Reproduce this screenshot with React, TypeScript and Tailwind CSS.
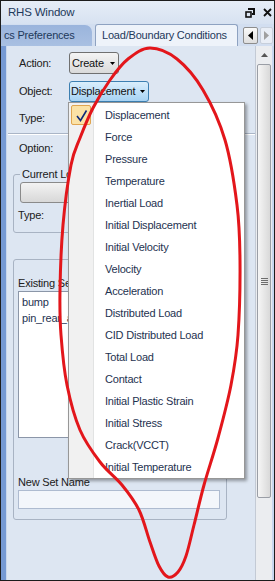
import React from "react";

const loadTypes = [
  "Displacement",
  "Force",
  "Pressure",
  "Temperature",
  "Inertial Load",
  "Initial Displacement",
  "Initial Velocity",
  "Velocity",
  "Acceleration",
  "Distributed Load",
  "CID Distributed Load",
  "Total Load",
  "Contact",
  "Initial Plastic Strain",
  "Initial Stress",
  "Crack(VCCT)",
  "Initial Temperature",
];

// hand drawn marker loop, traced from the screenshot
const loop: [number, number][] = [
  [150, 48], [177, 59], [203, 90], [225, 140], [237, 205], [240, 260], [238, 335],
  [231, 385], [218, 438], [204, 485], [194, 525], [186, 556], [178, 572], [168, 577],
  [159, 566], [150, 542], [139, 510], [122, 485], [100, 462], [80, 430], [67, 385],
  [61, 335], [60, 290], [63, 225], [71, 165], [80, 138], [93, 108], [110, 80], [128, 59],
];

const smoothPath = (pts: [number, number][]) => {
  const n = pts.length;
  let d = `M${pts[0][0]} ${pts[0][1]}`;
  for (let i = 0; i < n; i++) {
    const p0 = pts[(i - 1 + n) % n];
    const p1 = pts[i];
    const p2 = pts[(i + 1) % n];
    const p3 = pts[(i + 2) % n];
    const c1 = [p1[0] + (p2[0] - p0[0]) / 6, p1[1] + (p2[1] - p0[1]) / 6];
    const c2 = [p2[0] - (p3[0] - p1[0]) / 6, p2[1] - (p3[1] - p1[1]) / 6];
    d += ` C${c1[0].toFixed(1)} ${c1[1].toFixed(1)} ${c2[0].toFixed(1)} ${c2[1].toFixed(1)} ${p2[0]} ${p2[1]}`;
  }
  return d + " Z";
};

const Caret = ({ color = "#000" }: { color?: string }) => (
  <svg width="5" height="3" viewBox="0 0 5 3">
    <path d="M0 0 L5 0 L2.5 3 Z" fill={color} />
  </svg>
);

const TitleBar = () => (
  <div className="h-[23px] flex items-center justify-between pl-[7px] pr-[2px] bg-gradient-to-b from-[#e6edf7] to-[#d7e2f1] text-[#1e395b]">
    <span className="text-[11.5px]">RHS Window</span>
    <div className="flex items-center gap-[8px]">
      <svg width="10" height="10" viewBox="0 0 10 10">
        <path d="M3 1 H9 V6 H7" fill="none" stroke="#111" strokeWidth="2" />
        <rect x="1" y="4" width="5" height="5" fill="none" stroke="#111" strokeWidth="1.6" />
      </svg>
      <svg width="9" height="9" viewBox="0 0 9 9">
        <path d="M1 1 L8 8 M8 1 L1 8" stroke="#111" strokeWidth="1.8" />
      </svg>
    </div>
  </div>
);

const TabStrip = () => (
  <div className="h-[22px] flex items-end bg-[#d2def0] text-[#1e395b]">
    <div className="w-[91px] h-[21px] bg-gradient-to-b from-[#9ab4dc] to-[#a9c0e2] rounded-tr-[7px] flex items-center pl-[3px] overflow-hidden whitespace-nowrap">
      cs Preferences
    </div>
    <div className="ml-[3px] w-[143px] h-[22px] bg-[#eef3fa] border border-b-0 border-[#8ea2c1] rounded-t-[3px] flex items-center pl-[6px] whitespace-nowrap">
      Load/Boundary Conditions
    </div>
    <div className="ml-auto mr-[1px] mb-[2px] flex items-center gap-[2px]">
      <div className="w-[15px] h-[17px] border border-[#8d8d8d] rounded-[2px] bg-gradient-to-b from-[#fafafa] to-[#dedede] flex items-center justify-center">
        <svg width="5" height="9" viewBox="0 0 5 9">
          <path d="M5 0 L5 9 L0 4.5 Z" fill="#000" />
        </svg>
      </div>
      <div className="w-[13px] h-[17px] border border-[#c7cfdb] rounded-[2px] bg-[#e9eef6] flex items-center justify-center">
        <svg width="5" height="9" viewBox="0 0 5 9">
          <path d="M0 0 L0 9 L5 4.5 Z" fill="#a0a0a0" />
        </svg>
      </div>
    </div>
  </div>
);

const FormRow = ({ label, children, className = "" }: { label: string; children?: React.ReactNode; className?: string }) => (
  <div className={`h-[22px] flex items-center pl-[12px] ${className}`}>
    <span className="w-[50px] text-[#202020]">{label}</span>
    {children}
  </div>
);

const Panel = () => (
  <div className="flex-1 bg-[#dde6f2] pt-[6px]">
    <FormRow label="Action:">
      <div className="w-[50px] h-[22px] border border-[#707070] rounded-[3px] bg-gradient-to-b from-[#f4f4f4] to-[#dadada] flex items-center justify-between pl-[2px] pr-[3px] text-[#111]">
        <span>Create</span>
        <Caret />
      </div>
    </FormRow>
    <FormRow label="Object:" className="mt-[6px]">
      <div className="w-[80px] h-[21px] border border-[#3c7fb1] rounded-[3px] bg-gradient-to-b from-[#d9eefc] to-[#a7d3f3] flex items-center justify-between pl-[1px] pr-[3px] text-[#111]">
        <span>Displacement</span>
        <Caret />
      </div>
    </FormRow>
    <FormRow label="Type:" className="mt-[5px]" />
    <div className="mt-[4px] ml-[1px] h-[2px] border-t border-[#aab5c6] border-b border-b-white" />
    <FormRow label="Option:" className="mt-[2px]" />

    <fieldset className="mt-[9px] ml-[6px] w-[214px] border border-[#a8b3c3] rounded-[3px] pb-[10px]">
      <legend className="ml-[6px] px-[2px] leading-[13px] text-[#202020]">Current Load Case</legend>
      <div className="ml-[6px] mt-[1px] w-[190px] h-[21px] border border-[#8a8a8a] rounded-[3px] bg-gradient-to-b from-[#f3f3f3] to-[#d8d8d8]" />
      <div className="ml-[4px] mt-[5px] h-[14px] leading-[14px] text-[#202020]">Type:</div>
    </fieldset>

    <div className="mt-[26px] ml-[6px] w-[214px] border border-[#a8b3c3] rounded-[3px] pb-[10px]">
      <div className="ml-[4px] mt-[16px] h-[14px] leading-[14px] text-[#202020] whitespace-nowrap">Existing Sets</div>
      <div className="ml-[4px] mt-[1px] w-[202px] h-[147px] border border-[#8b96a8] bg-white pt-[2px] pl-[3px] text-[#1e3250]">
        <div className="leading-[16px]">bump</div>
        <div className="leading-[16px]">pin_rear_axle</div>
      </div>
      <div className="ml-[4px] mt-[37px] h-[14px] leading-[14px] text-[#202020]">New Set Name</div>
      <div className="ml-[4px] mt-[1px] w-[202px] h-[19px] border border-[#aebbd0] bg-[#f3f6fb]" />
    </div>
  </div>
);

const ScrollBar = () => (
  <div className="w-[17px] bg-[#ebedf0] border-l border-[#c3cad5] flex flex-col items-center">
    <div className="h-[17px] w-full flex items-center justify-center">
      <svg width="7" height="4" viewBox="0 0 7 4">
        <path d="M0 4 L7 4 L3.5 0 Z" fill="#555" />
      </svg>
    </div>
    <div className="mt-[1px] w-[14px] h-[434px] border border-[#9a9ea6] rounded-[2px] bg-gradient-to-r from-[#f6f6f6] to-[#d9d9d9] flex flex-col items-center justify-center gap-[1px]">
      <div className="w-[7px] h-px bg-[#6d6d6d]" />
      <div className="w-[7px] h-px bg-[#6d6d6d]" />
      <div className="w-[7px] h-px bg-[#6d6d6d]" />
      <div className="w-[7px] h-px bg-[#6d6d6d]" />
    </div>
  </div>
);

const DropMenu = () => (
  <div className="absolute left-[67px] top-[101px] w-[177px] border border-[#979797] bg-white flex shadow-[2px_2px_3px_rgba(0,0,0,0.35)]">
    <div className="w-[25px] bg-[#f1f1f1] border-r border-[#e2e3e3] pt-[2px] pl-[2px]">
      <div className="w-[20px] h-[20px] border border-[#e0a550] rounded-[2px] bg-[#fbe2a6] flex items-center justify-center">
        <svg width="13" height="13" viewBox="0 0 13 13">
          <path d="M2 7 L5.5 11.5 L11.5 1.5" fill="none" stroke="#0f2a78" strokeWidth="1.6" />
        </svg>
      </div>
    </div>
    <ul className="flex-1 border-l border-white pt-[1px] text-[#1e3250]">
      {loadTypes.map((t) => (
        <li key={t} className="h-[22px] flex items-center pl-[10px] whitespace-nowrap">
          {t}
        </li>
      ))}
    </ul>
  </div>
);

export default function App() {
  return (
    <div className="relative w-[275px] h-[581px] overflow-hidden border border-[#1c1c1c] bg-[#dde6f2] flex flex-col font-['Liberation_Sans',Arial,sans-serif] text-[11px] tracking-[-0.2px]">
      <TitleBar />
      <TabStrip />
      <div className="flex-1 flex">
        <div className="w-[5px] bg-[#7599d3] border-r border-[#c9d7ec] box-content" />
        <Panel />
        <ScrollBar />
        <div className="w-[2px] bg-[#c6d6ee]" />
      </div>
      <DropMenu />
      <svg className="absolute left-[-1px] top-[-1px] pointer-events-none" width="275" height="581" viewBox="0 0 275 581">
        <path d={smoothPath(loop)} fill="none" stroke="#e3161b" strokeWidth="3" strokeLinejoin="round" />
      </svg>
    </div>
  );
}
